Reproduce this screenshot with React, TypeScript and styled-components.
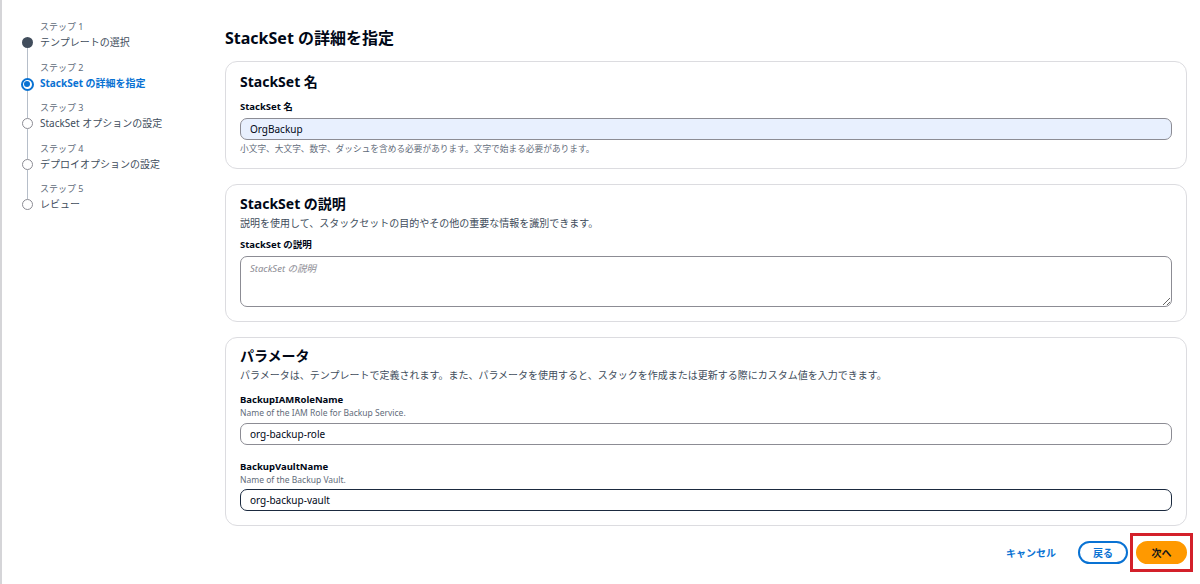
import React from "react";
import styled, { createGlobalStyle, css } from "styled-components";

const GlobalStyle = createGlobalStyle`
  html, body {
    margin: 0;
    padding: 0;
    background: #ffffff;
  }
  body {
    font-family: "Noto Sans", "Noto Sans CJK JP", sans-serif;
    color: #000716;
  }
  * { box-sizing: border-box; }
`;

const Page = styled.div`
  display: flex;
  height: 584px;
  border-left: 2px solid #d5d5d8;
  overflow: hidden;
`;

/* ---------- left wizard navigation ---------- */

const Nav = styled.nav`
  width: 223px;
  flex-shrink: 0;
  padding: 19px 0 0 19px;
  display: flex;
  flex-direction: column;
`;

const Step = styled.div`
  display: flex;
  gap: 7px;
`;

const Rail = styled.div`
  width: 12px;
  display: flex;
  flex-direction: column;
  align-items: center;
`;

const Segment = styled.div<{ $hidden?: boolean; $grow?: boolean }>`
  width: 1px;
  background: ${(p) => (p.$hidden ? "transparent" : "#b6bec9")};
  ${(p) => (p.$grow ? "flex: 1;" : "height: 18px;")}
`;

type StepState = "done" | "active" | "todo";

const Dot = styled.span<{ $state: StepState }>`
  flex-shrink: 0;
  border-radius: 50%;
  display: flex;
  align-items: center;
  justify-content: center;
  ${(p) =>
    p.$state === "done" &&
    css`
      width: 11px;
      height: 11px;
      background: #414d5c;
    `}
  ${(p) =>
    p.$state === "active" &&
    css`
      width: 13px;
      height: 13px;
      border: 2px solid #0972d3;
      background: #fff;
      &::after {
        content: "";
        width: 6px;
        height: 6px;
        border-radius: 50%;
        background: #0972d3;
      }
    `}
  ${(p) =>
    p.$state === "todo" &&
    css`
      width: 11px;
      height: 11px;
      border: 1.5px solid #8c8c94;
      background: #fff;
    `}
`;

const StepText = styled.div`
  display: flex;
  flex-direction: column;
  padding-bottom: 9.5px;
`;

const StepNumber = styled.span`
  font-size: 9px;
  line-height: 15px;
  color: #5f6b7a;
`;

const StepTitle = styled.span<{ $active?: boolean }>`
  font-size: 10px;
  line-height: 16px;
  color: ${(p) => (p.$active ? "#0972d3" : "#414d5c")};
  font-weight: ${(p) => (p.$active ? 700 : 400)};
  white-space: nowrap;
`;

/* ---------- main content ---------- */

const Main = styled.main`
  flex: 1;
  padding: 26px 13px 0 0;
  display: flex;
  flex-direction: column;
`;

const PageTitle = styled.h1`
  margin: 0 0 11px;
  font-size: 16px;
  line-height: 24px;
  font-weight: 700;
`;

const Card = styled.section<{ $pt: number; $pb?: number }>`
  border: 1px solid #dcdce0;
  border-radius: 12px;
  background: #fff;
  padding: ${(p) => p.$pt}px 14px ${(p) => p.$pb ?? 14}px;
  margin-bottom: 15px;
  display: flex;
  flex-direction: column;
`;

const CardTitle = styled.h2`
  margin: 0;
  font-size: 14px;
  line-height: 20px;
  font-weight: 700;
`;

const CardDesc = styled.p`
  margin: 2px 0 0;
  font-size: 10px;
  line-height: 14px;
  color: #414d5c;
`;

const Field = styled.div<{ $mt: number }>`
  margin-top: ${(p) => p.$mt}px;
  display: flex;
  flex-direction: column;
`;

const Label = styled.label`
  font-size: 9.5px;
  line-height: 14px;
  font-weight: 700;
`;

const SubLabel = styled.span`
  font-size: 8.5px;
  line-height: 12px;
  color: #5f6b7a;
`;

const Hint = styled.span`
  margin-top: 3px;
  font-size: 8.7px;
  line-height: 12px;
  color: #5f6b7a;
`;

const Input = styled.input<{ $mt: number; $autofill?: boolean; $focused?: boolean }>`
  margin-top: ${(p) => p.$mt}px;
  height: 22px;
  width: 100%;
  padding: 0 9px;
  font-family: inherit;
  font-size: 10px;
  color: #000716;
  border-radius: 7px;
  border: 1px solid #8c8c94;
  background: ${(p) => (p.$autofill ? "#e8f0fe" : "#fff")};
  outline: none;
  ${(p) =>
    p.$focused &&
    css`
      border: 1.5px solid #1b2a3f;
    `}
`;

const TextArea = styled.textarea`
  margin-top: 4px;
  height: 51px;
  width: 100%;
  padding: 4px 9px;
  font-family: inherit;
  font-size: 9.5px;
  color: #000716;
  border-radius: 7px;
  border: 1px solid #8c8c94;
  background: #fff;
  resize: vertical;
  outline: none;
  &::placeholder {
    color: #8c8c94;
    font-style: italic;
  }
`;

/* ---------- footer actions ---------- */

const Actions = styled.div`
  display: flex;
  justify-content: flex-end;
  align-items: center;
`;

const LinkButton = styled.button`
  border: none;
  background: none;
  font-family: inherit;
  font-size: 10px;
  font-weight: 700;
  color: #0972d3;
  padding: 0;
  margin-right: 22px;
  cursor: pointer;
`;

// red annotation box drawn around the primary button in the screenshot
const Highlight = styled.span`
  display: inline-flex;
  margin: -8px -6px -8px 2px;
  padding: 5px 3px;
  border: 3px solid #d3202a;
`;

const Button = styled.button<{ $primary?: boolean }>`
  height: 23px;
  min-width: 50px;
  padding: 0 12px;
  border-radius: 12px;
  font-family: inherit;
  font-size: 10px;
  font-weight: 700;
  cursor: pointer;
  ${(p) =>
    p.$primary
      ? css`
          min-width: 51px;
          border: 2px solid #ff9900;
          background: #ff9900;
          color: #0f141a;
        `
      : css`
          border: 2px solid #0972d3;
          background: #fff;
          color: #0972d3;
        `}
`;

const steps: { title: string; state: StepState }[] = [
  { title: "テンプレートの選択", state: "done" },
  { title: "StackSet の詳細を指定", state: "active" },
  { title: "StackSet オプションの設定", state: "todo" },
  { title: "デプロイオプションの設定", state: "todo" },
  { title: "レビュー", state: "todo" },
];

const App = () => {
  return (
    <>
      <GlobalStyle />
      <Page>
        <Nav>
          {steps.map((s, i) => (
            <Step key={s.title}>
              <Rail>
                <Segment $hidden={i === 0} />
                <Dot $state={s.state} />
                <Segment $grow $hidden={i === steps.length - 1} />
              </Rail>
              <StepText>
                <StepNumber>ステップ {i + 1}</StepNumber>
                <StepTitle $active={s.state === "active"}>{s.title}</StepTitle>
              </StepText>
            </Step>
          ))}
        </Nav>

        <Main>
          <PageTitle>StackSet の詳細を指定</PageTitle>

          <Card $pt={10} $pb={13}>
            <CardTitle>StackSet 名</CardTitle>
            <Field $mt={8}>
              <Label>StackSet 名</Label>
              <Input $mt={4} $autofill defaultValue="OrgBackup" />
              <Hint>小文字、大文字、数字、ダッシュを含める必要があります。文字で始まる必要があります。</Hint>
            </Field>
          </Card>

          <Card $pt={9}>
            <CardTitle>StackSet の説明</CardTitle>
            <CardDesc>説明を使用して、スタックセットの目的やその他の重要な情報を識別できます。</CardDesc>
            <Field $mt={8}>
              <Label>StackSet の説明</Label>
              <TextArea placeholder="StackSet の説明" />
            </Field>
          </Card>

          <Card $pt={8}>
            <CardTitle>パラメータ</CardTitle>
            <CardDesc>
              パラメータは、テンプレートで定義されます。また、パラメータを使用すると、スタックを作成または更新する際にカスタム値を入力できます。
            </CardDesc>
            <Field $mt={11}>
              <Label>BackupIAMRoleName</Label>
              <SubLabel>Name of the IAM Role for Backup Service.</SubLabel>
              <Input $mt={4} defaultValue="org-backup-role" />
            </Field>
            <Field $mt={15}>
              <Label>BackupVaultName</Label>
              <SubLabel>Name of the Backup Vault.</SubLabel>
              <Input $mt={3} $focused defaultValue="org-backup-vault" />
            </Field>
          </Card>

          <Actions>
            <LinkButton>キャンセル</LinkButton>
            <Button>戻る</Button>
            <Highlight>
              <Button $primary>次へ</Button>
            </Highlight>
          </Actions>
        </Main>
      </Page>
    </>
  );
};

export default App;
